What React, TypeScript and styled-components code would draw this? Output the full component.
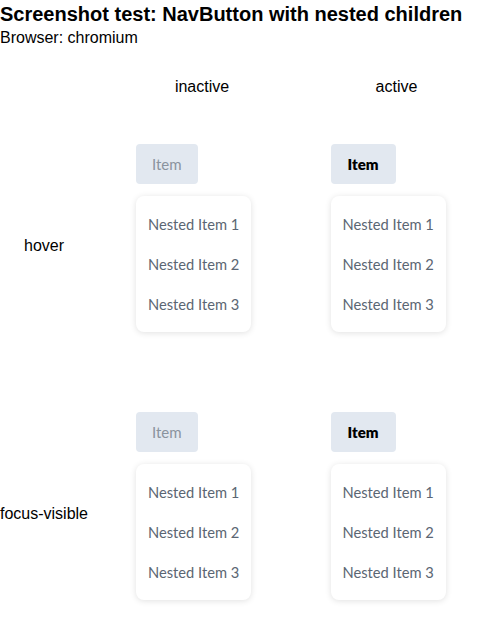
import React from "react";
import styled, { createGlobalStyle } from "styled-components";

const Global = createGlobalStyle`
  html, body { margin: 0; padding: 0; background: #fff; }
  body { font-family: "Liberation Sans", Arial, sans-serif; color: #000; }
`;

const Title = styled.h1`
  margin: 0;
  font-size: 20px;
  line-height: 28px;
  font-weight: 700;
`;

const Sub = styled.div`
  font-size: 16px;
  line-height: 19px;
`;

const Table = styled.div`
  display: grid;
  grid-template-columns: 88px 228px 161px;
  grid-template-rows: 50px 268px 268px;
  margin-top: 15px;
`;

const HeadCell = styled.div`
  font-size: 16px;
  display: flex;
  align-items: center;
  justify-content: center;
`;

const Cell = styled.div`
  display: flex;
  justify-content: center;
  padding-top: 32px;
`;

const Stack = styled.div`
  width: 132px;
  display: flex;
  flex-direction: column;
  align-items: flex-start;
  gap: 12px;
`;

const NavBtn = styled.button<{ $active?: boolean }>`
  height: 40px;
  border: none;
  border-radius: 4px;
  background: #e2e8f0;
  font-family: "Lato", "Noto Sans", sans-serif;
  font-size: 15px;
  font-weight: ${(p) => (p.$active ? 800 : 400)};
  color: ${(p) => (p.$active ? "#000" : "#8a939e")};
  padding: ${(p) => (p.$active ? "0 17px" : "0 16px")};
`;

const Menu = styled.div`
  background: #fff;
  border-radius: 8px;
  box-shadow: 0 1px 6px rgba(0, 0, 0, 0.12);
  padding: 8px 0;
  display: flex;
  flex-direction: column;
`;

const MenuItem = styled.div`
  height: 40px;
  padding: 0 12px;
  display: flex;
  align-items: center;
  font-family: "Lato", "Noto Sans", sans-serif;
  font-size: 14.7px;
  color: #5b6673;
  white-space: nowrap;
`;

const Label = styled.div`
  font-size: 16px;
  display: flex;
  align-items: center;
  justify-content: center;
  white-space: nowrap;
`;

function Demo({ active }: { active?: boolean }) {
  return (
    <Cell>
      <Stack>
        <NavBtn $active={active}>Item</NavBtn>
        <Menu>
          <MenuItem>Nested Item 1</MenuItem>
          <MenuItem>Nested Item 2</MenuItem>
          <MenuItem>Nested Item 3</MenuItem>
        </Menu>
      </Stack>
    </Cell>
  );
}

export default function App() {
  return (
    <>
      <Global />
      <Title>Screenshot test: NavButton with nested children</Title>
      <Sub>Browser: chromium</Sub>
      <Table>
        <HeadCell />
        <HeadCell>inactive</HeadCell>
        <HeadCell>active</HeadCell>
        <Label>hover</Label>
        <Demo />
        <Demo active />
        <Label>focus-visible</Label>
        <Demo />
        <Demo active />
      </Table>
    </>
  );
}
